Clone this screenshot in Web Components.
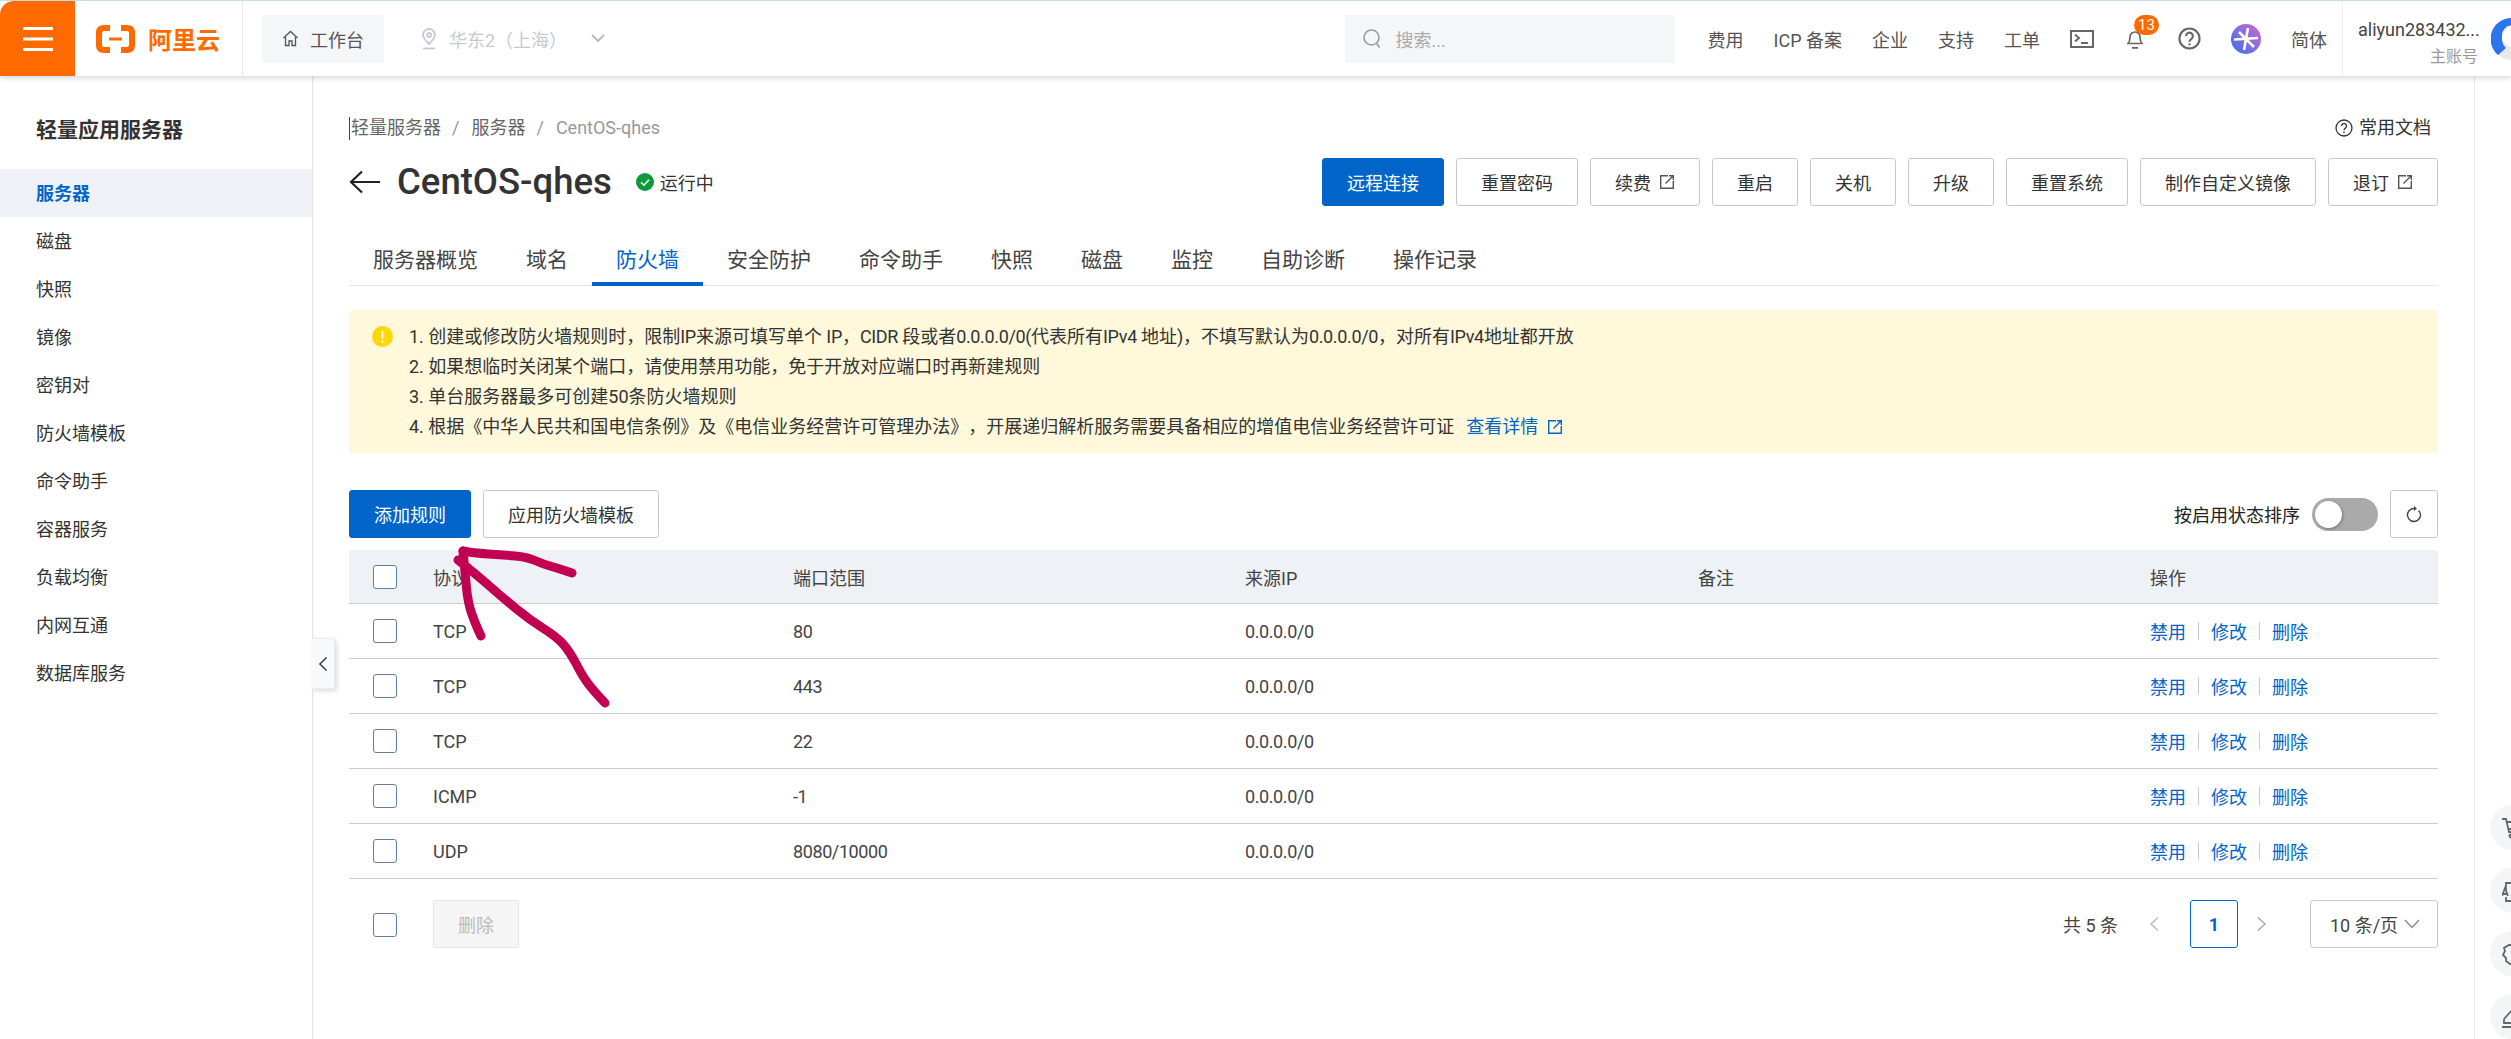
<!DOCTYPE html>
<html lang="zh-CN">
<head>
<meta charset="utf-8">
<title>CentOS-qhes</title>
<style>
    html,body{margin:0;padding:0;background:#fff;}
    body{
        width:2511px;height:1039px;overflow:hidden;position:relative;
        font-family:Roboto,"Noto Sans CJK SC",sans-serif;
        font-size:18px;color:#333;
        text-spacing-trim:space-all;
    }
    notice-box span{letter-spacing:-.35px;}
</style>
</head>
<body>
<top-bar></top-bar>
<page-shell>
    <side-nav slot="nav">
        <nav-item active>服务器</nav-item>
        <nav-item>磁盘</nav-item>
        <nav-item>快照</nav-item>
        <nav-item>镜像</nav-item>
        <nav-item>密钥对</nav-item>
        <nav-item>防火墙模板</nav-item>
        <nav-item>命令助手</nav-item>
        <nav-item>容器服务</nav-item>
        <nav-item>负载均衡</nav-item>
        <nav-item>内网互通</nav-item>
        <nav-item>数据库服务</nav-item>
    </side-nav>
    <server-head>
        <ui-btn variant="primary">远程连接</ui-btn>
        <ui-btn>重置密码</ui-btn>
        <ui-btn ext>续费</ui-btn>
        <ui-btn>重启</ui-btn>
        <ui-btn>关机</ui-btn>
        <ui-btn>升级</ui-btn>
        <ui-btn>重置系统</ui-btn>
        <ui-btn>制作自定义镜像</ui-btn>
        <ui-btn ext>退订</ui-btn>
    </server-head>
    <tab-strip>
        <tab-item>服务器概览</tab-item>
        <tab-item>域名</tab-item>
        <tab-item active>防火墙</tab-item>
        <tab-item>安全防护</tab-item>
        <tab-item>命令助手</tab-item>
        <tab-item>快照</tab-item>
        <tab-item>磁盘</tab-item>
        <tab-item>监控</tab-item>
        <tab-item>自助诊断</tab-item>
        <tab-item>操作记录</tab-item>
    </tab-strip>
    <notice-box>
        <div>1. 创建或修改防火墙规则时，限制<span>IP</span>来源可填写单个 <span>IP</span>，<span>CIDR </span>段或者<span>0.0.0.0/0(</span>代表所有<span>IPv4 </span>地址<span>)</span>，不填写默认为<span>0.0.0.0/0</span>，对所有<span>IPv4</span>地址都开放</div>
        <div>2. 如果想临时关闭某个端口，请使用禁用功能，免于开放对应端口时再新建规则</div>
        <div>3. 单台服务器最多可创建50条防火墙规则</div>
        <div>4. 根据《中华人民共和国电信条例》及《电信业务经营许可管理办法》，开展递归解析服务需要具备相应的增值电信业务经营许可证<ext-link>查看详情</ext-link></div>
    </notice-box>
    <fw-toolbar>
        <ui-btn variant="primary" slot="left">添加规则</ui-btn>
        <ui-btn slot="left">应用防火墙模板</ui-btn>
    </fw-toolbar>
    <fw-table>
        <fw-row head a="协议" b="端口范围" c="来源IP" d="备注" e="操作"></fw-row>
        <fw-row a="TCP" b="80" c="0.0.0.0/0"></fw-row>
        <fw-row a="TCP" b="443" c="0.0.0.0/0"></fw-row>
        <fw-row a="TCP" b="22" c="0.0.0.0/0"></fw-row>
        <fw-row a="ICMP" b="-1" c="0.0.0.0/0"></fw-row>
        <fw-row a="UDP" b="8080/10000" c="0.0.0.0/0"></fw-row>
    </fw-table>
    <fw-footer></fw-footer>
    <side-rail slot="rail"></side-rail>
</page-shell>
<ink-arrow></ink-arrow>

<script>
const EXT_ICON = `<svg width="16" height="16" viewBox="0 0 16 16" fill="none" stroke="currentColor" stroke-width="1.4"><path d="M9 1.700H1.700v12.600h12.600V7"/><path d="M6.500 9.500 14 2M10 1.700h4.300V6"/></svg>`;

class TopBar extends HTMLElement{
    constructor(){
        super();
        this.attachShadow({mode:"open"});
    }
    getStyles(){
        return `
        <style>
            :host{display:flex;align-items:center;height:76px;box-sizing:border-box;border-top:1px solid #c4dde2;background:#fff;box-shadow:0 2px 6px rgba(0,0,0,.16);position:relative;z-index:3;overflow:hidden;}
            .burger{width:75px;height:75px;background:#ff6a00;border-top-left-radius:14px;display:flex;align-items:center;justify-content:center;flex:none;}
            .logo{width:146px;height:75px;padding-left:21px;border-right:1px solid #e8e8e8;display:flex;align-items:center;gap:13px;flex:none;color:#ff6a00;font-size:24px;font-weight:700;}
            .work{width:122px;height:48px;margin-left:19px;background:#f5f6f8;border-radius:3px;display:flex;align-items:center;gap:11px;padding-left:20px;box-sizing:border-box;flex:none;color:#555;}
            .region{margin-left:36px;display:flex;align-items:center;color:#c5cad0;flex:none;gap:11px;}
            .region .chev{margin-left:13px;}
            .search{width:330px;height:48px;margin-left:auto;background:#f5f6f8;display:flex;align-items:center;gap:14px;padding-left:17px;box-sizing:border-box;color:#aaa;flex:none;}
            .links{display:flex;align-items:center;gap:30px;margin-left:33px;flex:none;color:#555;}
            .ico{display:flex;position:relative;flex:none;}
            .badge{position:absolute;left:7px;top:-13px;width:25px;height:20px;border-radius:10px;background:#ff6a00;color:#fff;font-size:15px;line-height:20px;text-align:center;}
            .account{width:169px;height:75px;margin-left:15px;border-left:1px solid #eee;box-sizing:border-box;padding-left:15px;display:flex;align-items:center;flex:none;overflow:hidden;}
            .who{width:120px;flex:none;text-align:right;line-height:27px;margin-top:8px;}
            .who .name{color:#444;white-space:nowrap;}
            .who .role{color:#999;font-size:16px;}
            .avatar{flex:none;margin-left:13px;}
        </style>
        `;
    }
    getTemplate(){
        const template = document.createElement('template');
        template.innerHTML=`
            <div class="burger">
                <svg width="30" height="24" viewBox="0 0 30 24" fill="#fff"><rect y="0" width="30" height="3"/><rect y="10.500" width="30" height="3"/><rect y="21" width="30" height="3"/></svg>
            </div>
            <div class="logo">
                <svg width="39" height="28" viewBox="0 0 39 28" fill="none" stroke="#ff6a00" stroke-width="6"><path d="M14 3H8Q3 3 3 8V20Q3 25 8 25H14"/><path d="M25 3H31Q36 3 36 8V20Q36 25 31 25H25"/><path d="M13 14H26" stroke-width="3"/></svg>
                <span>阿里云</span>
            </div>
            <div class="work">
                <svg width="17" height="17" viewBox="0 0 17 17" fill="none" stroke="#555" stroke-width="1.300"><path d="M1.500 8 8.500 1.500 15.500 8M3.500 7v8.500h3.500V11h3v4.500h3.500V7"/></svg>
                <span>工作台</span>
            </div>
            <div class="region">
                <svg width="18" height="22" viewBox="0 0 18 22" fill="none" stroke="#c5cad0" stroke-width="1.800"><path d="M9 16C5 12 3 9.500 3 7a6 6 0 0 1 12 0c0 2.500-2 5-6 9Z"/><circle cx="9" cy="7" r="2"/><path d="M3 20.500h12"/></svg>
                <span>华东2（上海）</span>
                <svg class="chev" width="14" height="9" viewBox="0 0 14 9" fill="none" stroke="#b5bac0" stroke-width="1.800"><path d="M1 1l6 6 6-6"/></svg>
            </div>
            <div class="search">
                <svg width="20" height="22" viewBox="0 0 20 22" fill="none" stroke="#999" stroke-width="1.600"><circle cx="9.500" cy="9.500" r="7.500"/><path d="M14.500 15.500l3 4"/></svg>
                <span>搜索...</span>
            </div>
            <div class="links">
                <span>费用</span>
                <span>ICP 备案</span>
                <span>企业</span>
                <span>支持</span>
                <span>工单</span>
                <span class="ico">
                    <svg width="24" height="18" viewBox="0 0 24 18" fill="none" stroke="#666" stroke-width="2"><rect x="1" y="1" width="22" height="16"/><path d="M5 4.500l4 3.500-4 3.500M11 13h7"/></svg>
                </span>
                <span class="ico" style="margin-left:3px">
                    <svg width="16" height="21" viewBox="0 0 16 21" fill="none" stroke="#666" stroke-width="1.700"><path d="M1 15.500c1.500-1.500 2-3 2-6.500a5 5 0 0 1 10 0c0 3.500.5 5 2 6.500ZM5 19.800h6"/></svg>
                    <span class="badge">13</span>
                </span>
                <span class="ico" style="margin-left:5px">
                    <svg width="23" height="23" viewBox="0 0 24 24" fill="none" stroke="#666" stroke-width="2.200"><circle cx="12" cy="12" r="10.500"/><path d="M8.500 9.500a3.500 3.500 0 1 1 5.500 2.800c-1.300.9-2 1.500-2 3"/><path d="M12 17v2.200"/></svg>
                </span>
                <span class="ico">
                    <svg width="30" height="30" viewBox="0 0 30 30"><defs><linearGradient id="st" x1="1" y1="0" x2="0" y2="1"><stop offset="0" stop-color="#c46ac0"/><stop offset=".5" stop-color="#8a6de0"/><stop offset="1" stop-color="#2a72f0"/></linearGradient></defs><circle cx="15" cy="15" r="15" fill="url(#st)"/><path d="M3 15.500l24-1.500M17 4l-4 22M8 8l15 15" stroke="#fff" stroke-width="2.600" fill="none"/></svg>
                </span>
                <span>简体</span>
            </div>
            <div class="account">
                <div class="who">
                    <div class="name">aliyun283432...</div>
                    <div class="role">主账号</div>
                </div>
                <svg class="avatar" width="42" height="42" viewBox="0 0 42 42"><circle cx="21" cy="21" r="21" fill="#e8e8e8"/><path d="M21 0a21 21 0 0 0-14 37L15 30A13 13 0 0 1 21 8Z" fill="#2a76ea"/><circle cx="22" cy="18" r="11" fill="#fff"/></svg>
            </div>
        `;
        return template;
    }
    render(){
        this.shadowRoot.innerHTML=this.getStyles();
        this.shadowRoot.appendChild(this.getTemplate().content.cloneNode(true));
    }
    connectedCallback(){
        this.render();
    }
}
customElements.define('top-bar', TopBar);

// contenedor general: menu, contenido y barra derecha
class PageShell extends HTMLElement{
    constructor(){
        super();
        this.attachShadow({mode:"open"});
        this.shadowRoot.innerHTML=`
            <style>
                :host{display:flex;height:963px;position:relative;}
                .main{width:2089px;padding:40px 36px 0 36px;flex:none;}
                .fold{position:absolute;left:312px;top:562px;width:23px;height:51px;background:#f8f9fb;border:1px solid #eee;border-left:0;border-radius:0 3px 3px 0;box-shadow:2px 2px 5px rgba(0,0,0,.15);box-sizing:border-box;display:flex;align-items:center;justify-content:center;}
            </style>
            <slot name="nav"></slot>
            <div class="main"><slot></slot></div>
            <slot name="rail"></slot>
            <div class="fold"><svg width="10" height="16" viewBox="0 0 10 16" fill="none" stroke="#444" stroke-width="1.600"><path d="M8.500 1.500 2 8l6.500 6.500"/></svg></div>
        `;
    }
}
customElements.define('page-shell', PageShell);

class SideNav extends HTMLElement{
    constructor(){
        super();
        this.attachShadow({mode:"open"});
        this.shadowRoot.innerHTML=`
            <style>
                :host{display:block;width:313px;flex:none;box-sizing:border-box;border-right:1px solid #e5e5e5;box-shadow:1px 0 3px rgba(0,0,0,.04);}
                h2{margin:0;padding:38px 0 23px 36px;font-size:21px;line-height:32px;font-weight:700;color:#333;}
            </style>
            <h2>轻量应用服务器</h2>
            <slot></slot>
        `;
    }
}
customElements.define('side-nav', SideNav);

class NavItem extends HTMLElement{
    constructor(){
        super();
        this.attachShadow({mode:"open"});
        this.shadowRoot.innerHTML=`
            <style>
                :host{display:block;height:48px;line-height:50px;padding-left:36px;color:#333;}
                :host([active]){background:#eef1f6;color:#0064c8;font-weight:700;}
            </style>
            <slot></slot>
        `;
    }
}
customElements.define('nav-item', NavItem);

class UiBtn extends HTMLElement{
    constructor(){
        super();
        this.attachShadow({mode:"open"});
    }
    connectedCallback(){
        this.shadowRoot.innerHTML=`
            <style>
                :host{display:inline-flex;align-items:center;justify-content:center;gap:8px;height:48px;padding:0 24px;box-sizing:border-box;border:1px solid #c9c9c9;border-radius:3px;background:#fff;color:#333;flex:none;white-space:nowrap;}
                :host([variant="primary"]){background:#0064c8;border-color:#0064c8;color:#fff;}
                svg{color:#555;}
            </style>
            <slot></slot>${this.hasAttribute('ext')?EXT_ICON:''}
        `;
    }
}
customElements.define('ui-btn', UiBtn);

class ServerHead extends HTMLElement{
    constructor(){
        super();
        this.attachShadow({mode:"open"});
        this.shadowRoot.innerHTML=`
            <style>
                :host{display:block;}
                .crumbs{display:flex;align-items:center;height:24px;line-height:24px;color:#666;}
                .crumbs .sep{margin:0 12px 0 11px;color:#999;}
                .crumbs .now{color:#999;}
                .caret{width:1px;height:23px;background:#444;margin-right:1px;}
                .doc{margin-left:auto;margin-right:7px;display:flex;align-items:center;gap:6px;color:#333;}
                .title{display:flex;align-items:center;margin-top:18px;height:48px;}
                h1{margin:0 0 0 17px;font-size:36.500px;font-weight:500;line-height:48px;color:#333;}
                .state{display:flex;align-items:center;gap:6px;margin-left:24px;color:#333;}
                .btns{margin-left:auto;display:flex;gap:12px;}
            </style>
            <div class="crumbs">
                <span class="caret"></span><span>轻量服务器</span><span class="sep">/</span><span>服务器</span><span class="sep">/</span><span class="now">CentOS-qhes</span>
                <span class="doc">
                    <svg width="18" height="18" viewBox="0 0 18 18" fill="none" stroke="#333" stroke-width="1.300"><circle cx="9" cy="9" r="8"/><path d="M6.500 7a2.500 2.500 0 1 1 3.800 2.100c-.9.600-1.300 1-1.300 2.100M9 12.600v1.600"/></svg>
                    常用文档
                </span>
            </div>
            <div class="title">
                <svg width="31" height="24" viewBox="0 0 31 24" fill="none" stroke="#222" stroke-width="2.200"><path d="M13 1.500 2 12l11 10.500M2 12h29"/></svg>
                <h1>CentOS-qhes</h1>
                <span class="state">
                    <svg width="18" height="18" viewBox="0 0 18 18"><circle cx="9" cy="9" r="9" fill="#0a9a3c"/><path d="M5 9.200l3 3 5-5.500" fill="none" stroke="#fff" stroke-width="1.600"/></svg>
                    运行中
                </span>
                <span class="btns"><slot></slot></span>
            </div>
        `;
    }
}
customElements.define('server-head', ServerHead);

class TabStrip extends HTMLElement{
    constructor(){
        super();
        this.attachShadow({mode:"open"});
        this.shadowRoot.innerHTML=`
            <style>
                :host{display:flex;height:50px;margin-top:30px;box-sizing:border-box;border-bottom:1px solid #e5e5e5;}
            </style>
            <slot></slot>
        `;
    }
}
customElements.define('tab-strip', TabStrip);

class TabItem extends HTMLElement{
    constructor(){
        super();
        this.attachShadow({mode:"open"});
        this.shadowRoot.innerHTML=`
            <style>
                :host{display:block;height:50px;box-sizing:border-box;padding:0 24px;font-size:21px;line-height:48px;color:#444;}
                :host([active]){color:#0064c8;border-bottom:4px solid #0064c8;}
            </style>
            <slot></slot>
        `;
    }
}
customElements.define('tab-item', TabItem);

class NoticeBox extends HTMLElement{
    constructor(){
        super();
        this.attachShadow({mode:"open"});
        this.shadowRoot.innerHTML=`
            <style>
                :host{display:flex;gap:16px;margin-top:24px;height:143px;box-sizing:border-box;padding:12px 0 0 23px;background:#fff8db;border-radius:3px;line-height:30px;color:#333;}
                svg{flex:none;margin-top:4px;}
                .body{white-space:nowrap;}
            </style>
            <svg width="21" height="21" viewBox="0 0 21 21"><circle cx="10.500" cy="10.500" r="10.500" fill="#ffd60a"/><path d="M10.500 5v7.500M10.500 14.500v2" stroke="#fff" stroke-width="1.600"/></svg>
            <div class="body"><slot></slot></div>
        `;
    }
}
customElements.define('notice-box', NoticeBox);

class ExtLink extends HTMLElement{
    constructor(){
        super();
        this.attachShadow({mode:"open"});
        this.shadowRoot.innerHTML=`
            <style>
                :host{display:inline-flex;align-items:center;gap:9px;margin-left:12px;color:#0064c8;}
            </style>
            <slot></slot>${EXT_ICON}
        `;
    }
}
customElements.define('ext-link', ExtLink);

class FwToolbar extends HTMLElement{
    constructor(){
        super();
        this.attachShadow({mode:"open"});
        this.shadowRoot.innerHTML=`
            <style>
                :host{display:flex;align-items:center;gap:12px;margin-top:37px;height:48px;}
                .right{margin-left:auto;display:flex;align-items:center;gap:12px;color:#222;}
                .switch{width:66px;height:33px;border-radius:17px;background:#aaa;position:relative;}
                .knob{position:absolute;left:3px;top:3px;width:27px;height:27px;border-radius:50%;background:#fff;box-shadow:1px 1px 3px rgba(0,0,0,.3);}
                .refresh{width:48px;height:48px;box-sizing:border-box;border:1px solid #c9c9c9;border-radius:3px;display:flex;align-items:center;justify-content:center;}
            </style>
            <slot name="left"></slot>
            <div class="right">
                <span>按启用状态排序</span>
                <span class="switch"><span class="knob"></span></span>
                <span class="refresh">
                    <svg width="16" height="18" viewBox="0 0 16 18" fill="none" stroke="#444" stroke-width="1.400"><path d="M12.600 5.400A6.500 6.500 0 1 1 8 3.500"/><path d="M8 1l3 2.500L8 6Z" fill="#444" stroke="none"/></svg>
                </span>
            </div>
        `;
    }
}
customElements.define('fw-toolbar', FwToolbar);

class FwTable extends HTMLElement{
    constructor(){
        super();
        this.attachShadow({mode:"open"});
        this.shadowRoot.innerHTML=`
            <style>
                :host{display:block;margin-top:12px;--cols:84px 360px 452px 453px 452px 288px;}
            </style>
            <slot></slot>
        `;
    }
}
customElements.define('fw-table', FwTable);

class FwCheck extends HTMLElement{
    constructor(){
        super();
        this.attachShadow({mode:"open"});
        this.shadowRoot.innerHTML=`
            <style>
                :host{display:block;width:24px;height:24px;box-sizing:border-box;border:1px solid #5f7fa3;border-radius:3px;background:#fff;margin-left:24px;}
            </style>
        `;
    }
}
customElements.define('fw-check', FwCheck);

class FwRow extends HTMLElement{
    constructor(){
        super();
        this.attachShadow({mode:"open"});
    }
    connectedCallback(){
        const head = this.hasAttribute('head');
        const ops = head ? this.getAttribute('e') : `<a>禁用</a><i></i><a>修改</a><i></i><a>删除</a>`;
        this.shadowRoot.innerHTML=`
            <style>
                :host{display:grid;grid-template-columns:var(--cols);align-items:center;height:55px;box-sizing:border-box;border-bottom:1px solid #ccc;color:#444;}
                :host([head]){height:54px;background:#eef1f6;border-radius:3px 3px 0 0;}
                .ops{display:flex;align-items:center;gap:12px;}
                .num{letter-spacing:-.4px;}
                a{color:#0064c8;}
                i{width:1px;height:18px;background:#ccc;}
            </style>
            <fw-check></fw-check>
            <span>${this.getAttribute('a')}</span>
            <span class="${head?'':'num'}">${this.getAttribute('b')}</span>
            <span class="${head?'':'num'}">${this.getAttribute('c')}</span>
            <span>${this.getAttribute('d')||''}</span>
            <span class="ops">${ops}</span>
        `;
    }
}
customElements.define('fw-row', FwRow);

class FwFooter extends HTMLElement{
    constructor(){
        super();
        this.attachShadow({mode:"open"});
        this.shadowRoot.innerHTML=`
            <style>
                :host{display:flex;align-items:center;height:48px;margin-top:21px;color:#444;}
                .del{margin-left:36px;width:86px;height:48px;box-sizing:border-box;background:#f5f5f5;border:1px solid #e5e5e5;border-radius:3px;color:#bbb;display:flex;align-items:center;justify-content:center;}
                .pager{margin-left:auto;display:flex;align-items:center;}
                .arr{display:flex;}
                .page{width:48px;height:48px;box-sizing:border-box;border:1.500px solid #0064c8;border-radius:3px;color:#0064c8;font-weight:700;display:flex;align-items:center;justify-content:center;margin:0 19px 0 31px;}
                .size{width:128px;height:48px;box-sizing:border-box;border:1px solid #c9c9c9;border-radius:3px;display:flex;align-items:center;justify-content:space-between;padding:0 17px 0 19px;margin-left:43px;}
                .check{margin-top:2px;}
            </style>
            <fw-check class="check"></fw-check>
            <span class="del">删除</span>
            <span class="pager">
                <span class="total">共 5 条</span>
                <span class="arr" style="margin-left:31px"><svg width="10" height="16" viewBox="0 0 10 16" fill="none" stroke="#bbb" stroke-width="1.500"><path d="M9 1.500 2 8l7 6.500"/></svg></span>
                <span class="page">1</span>
                <span class="arr"><svg width="10" height="16" viewBox="0 0 10 16" fill="none" stroke="#aaa" stroke-width="1.500"><path d="M1 1.500 8 8l-7 6.500"/></svg></span>
                <span class="size">
                    <span>10 条/页</span>
                    <svg width="16" height="10" viewBox="0 0 16 10" fill="none" stroke="#888" stroke-width="1.300"><path d="M1 1l7 7.500L15 1"/></svg>
                </span>
            </span>
        `;
    }
}
customElements.define('fw-footer', FwFooter);

class SideRail extends HTMLElement{
    constructor(){
        super();
        this.attachShadow({mode:"open"});
        this.shadowRoot.innerHTML=`
            <style>
                :host{display:flex;flex-direction:column;width:37px;flex:none;box-sizing:border-box;border-left:1px solid #e8e8e8;padding:712px 0 0 6px;overflow:hidden;}
                .line{height:2px;background:#eee;margin-bottom:17px;}
                .dot{width:45px;height:45px;flex:none;border-radius:50%;background:#f4f5f7;margin:0 0 18px 9px;padding:12px 0 0 12px;box-sizing:border-box;}
                svg{display:block;}
            </style>
            <div class="line"></div>
            <div class="dot"><svg width="24" height="22" viewBox="0 0 24 22" fill="none" stroke="#666" stroke-width="1.800"><path d="M0 2h4l3 13h12M5 5h14l-2 7H7"/><circle cx="9" cy="19" r="1.500"/></svg></div>
            <div class="dot"><svg width="24" height="24" viewBox="0 0 24 24" fill="none" stroke="#666" stroke-width="1.800"><path d="M4 11V3h14M4 17v4h14M0 16l3-8 3 8M1 14h4"/></svg></div>
            <div class="dot"><svg width="24" height="24" viewBox="0 0 24 24" fill="none" stroke="#666" stroke-width="1.800"><path d="M7 2h8l2 3 4 1 2 5-2 3 1 4-4 4h-4l-3-2-3 1-4-3V15L1 12l2-4-1-3Z"/></svg></div>
            <div class="dot"><svg width="24" height="24" viewBox="0 0 24 24" fill="none" stroke="#666" stroke-width="1.800"><path d="M2 13 11 3l9 9M2 13v4h20M0 21h24"/></svg></div>
        `;
    }
}
customElements.define('side-rail', SideRail);

// la flecha pintada a mano encima de la captura
class InkArrow extends HTMLElement{
    constructor(){
        super();
        this.attachShadow({mode:"open"});
    }
    smooth(pts){
        let d = `M${pts[0]} ${pts[1]}`;
        for(let i=2;i<pts.length-2;i+=2){
            d += ` Q${pts[i]} ${pts[i+1]} ${(pts[i]+pts[i+2])/2} ${(pts[i+1]+pts[i+3])/2}`;
        }
        return d + ` L${pts[pts.length-2]} ${pts[pts.length-1]}`;
    }
    connectedCallback(){
        const strokes = [
            [463,551,473,553,503,555,527,557,543,564,557,568,572,573],
            [463,551,465,573,468,603,475,623,481,636],
            [458,560,477,575,503,598,530,620,557,637,570,652,583,677,593,690,605,703]
        ];
        this.shadowRoot.innerHTML=`
            <style>
                :host{position:absolute;left:0;top:0;pointer-events:none;z-index:5;}
                svg{display:block;}
            </style>
            <svg width="2511" height="1039" fill="none" stroke="#c10051" stroke-width="9" stroke-linecap="round" stroke-linejoin="round">
                ${strokes.map(s=>`<path d="${this.smooth(s)}"/>`).join('')}
            </svg>
        `;
    }
}
customElements.define('ink-arrow', InkArrow);
</script>
</body>
</html>
